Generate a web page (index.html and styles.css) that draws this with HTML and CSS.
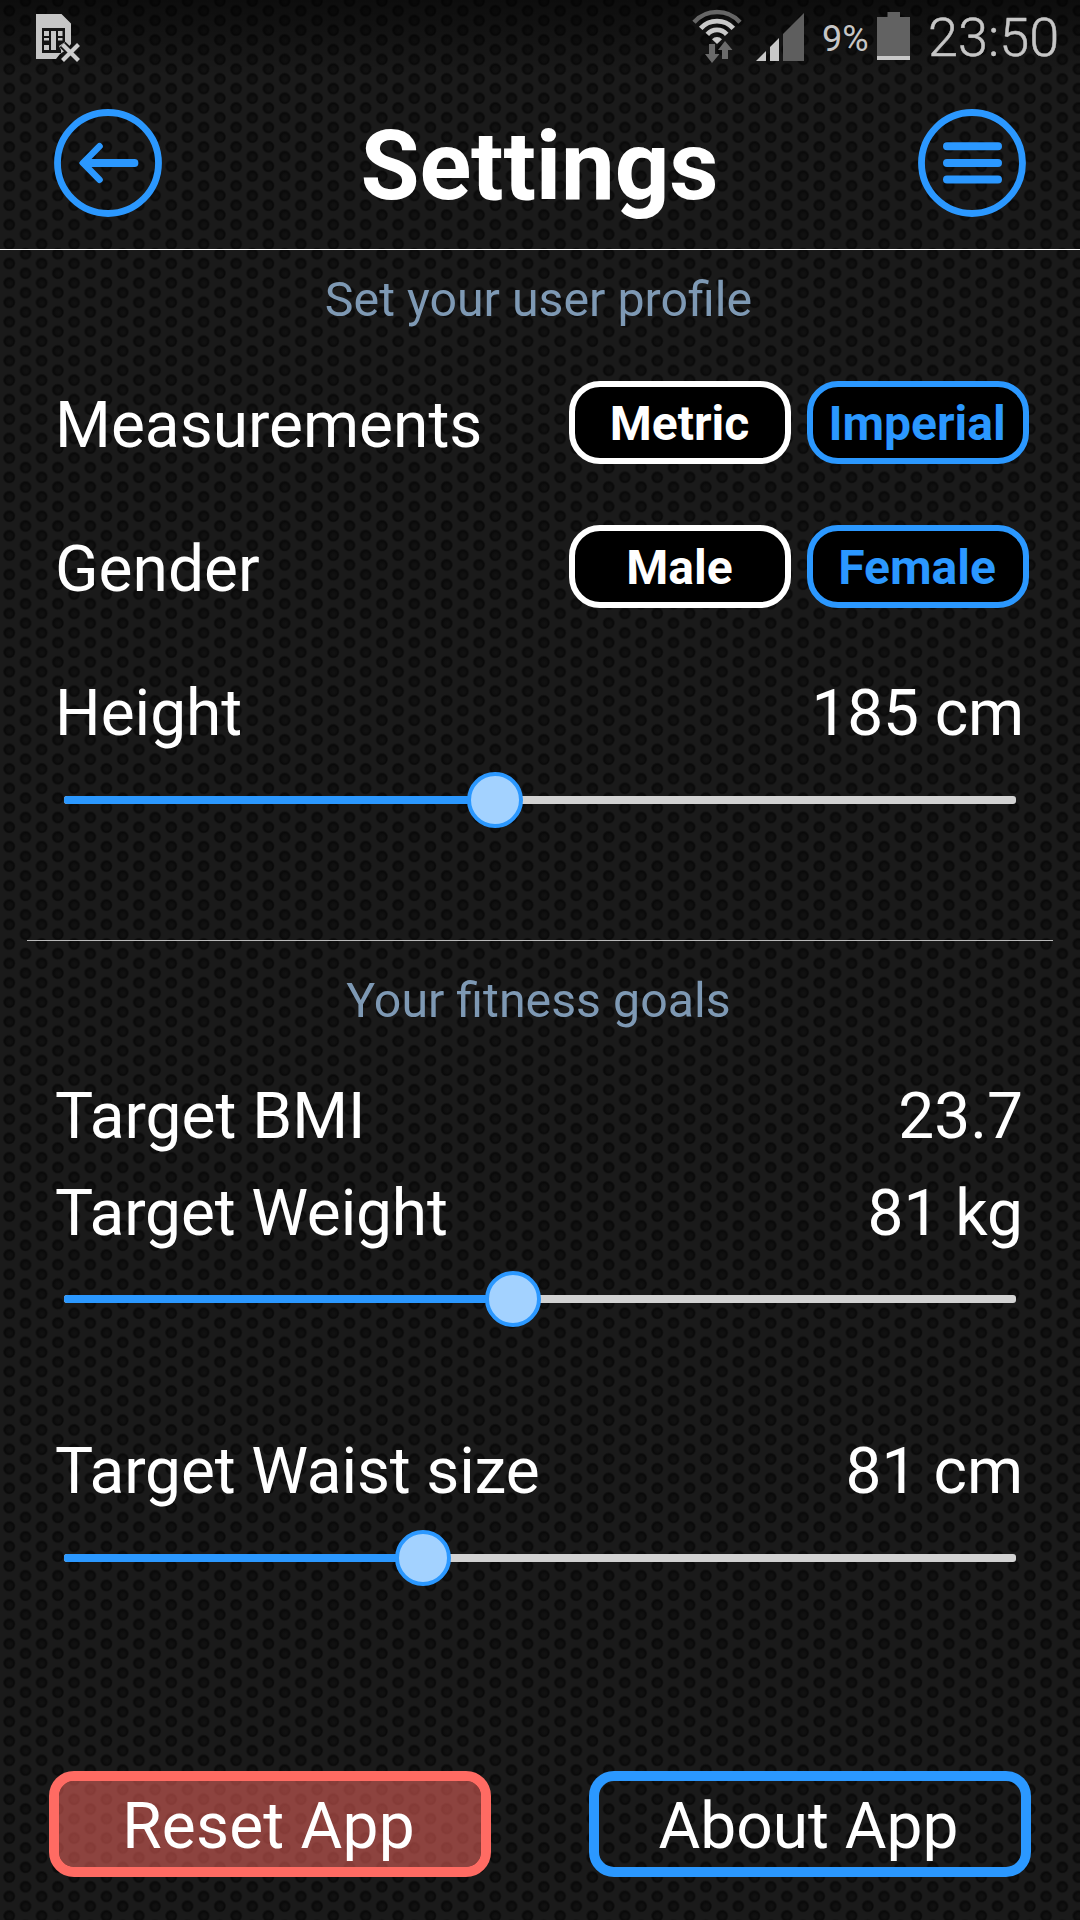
FILE: index.html
```html
<!DOCTYPE html>
<html lang="en">
<head>
<meta charset="utf-8">
<title>Settings</title>
<link rel="stylesheet" href="styles.css">
</head>
<body>
<svg class="mesh" width="1080" height="1920" aria-hidden="true">
  <defs>
    <radialGradient id="hole" cx="0.5" cy="0.5" r="0.5" fx="0.56" fy="0.58">
      <stop offset="0" stop-color="#131313"/>
      <stop offset="0.45" stop-color="#0f0f0f"/>
      <stop offset="0.75" stop-color="#090909"/>
      <stop offset="1" stop-color="#161616"/>
    </radialGradient>
    <pattern id="grid" x="1.1" y="0.98" width="32.4" height="19.44" patternUnits="userSpaceOnUse">
      <rect width="32.4" height="19.44" fill="#1a1a1a"/>
      <circle cx="8.1" cy="9.72" r="6.3" fill="url(#hole)"/>
      <circle cx="24.3" cy="0" r="6.3" fill="url(#hole)"/>
      <circle cx="24.3" cy="19.44" r="6.3" fill="url(#hole)"/>
    </pattern>
  </defs>
  <rect width="1080" height="1920" fill="url(#grid)"/>
</svg>

<div class="screen">
  <div class="status-bar">
    <svg class="sim" width="46" height="52" viewBox="35 12 46 52">
      <path d="M36 14H61.500L71 23.500V44L66 50 60 54 56 59H36Z" fill="#c6c6c6"/>
      <path d="M42 28H65V42L59 46 61 50V53H42Z" fill="#141414"/>
      <path d="M44 31h5v5h-5zM51 31h5v19h-5zM58 31h4.500v5H58zM44 38h5v2.500h-5zM44 45h5v5h-5zM58 38h4.500v2.500H58z" fill="#c6c6c6"/>
      <path d="M62.500 44.500 78.500 60.500M78.500 44.500 62.500 60.500" stroke="#161616" stroke-width="8"/>
      <path d="M62.500 44.500 78.500 60.500M78.500 44.500 62.500 60.500" stroke="#cdcdcd" stroke-width="4.200"/>
    </svg>
    <div class="status-right">
      <svg width="50" height="56" viewBox="692 9 50 56" fill="none">
        <path d="M694 22.300A31 31 0 0 1 740 22.300" stroke="#666" stroke-width="4.500"/>
        <path d="M700.700 28.300A22 22 0 0 1 733.300 28.300" stroke="#c8c8c8" stroke-width="4.800"/>
        <path d="M707.300 34.300A13 13 0 0 1 726.700 34.300" stroke="#c8c8c8" stroke-width="4.800"/>
        <path d="M712 39.200A7 7 0 0 1 722 39.200L717 44Z" fill="#c8c8c8"/>
        <path d="M709 44h6v10h4.500l-7.500 9-7-9h4zM722 59v-9h-4l7-9 7.500 9H728v9z" fill="#6a6a6a"/>
      </svg>
      <svg class="signal" width="48" height="50" viewBox="756 12 48 50">
        <path d="M756 61 766 51V61ZM770 47 779 38V61H770Z" fill="#c8c8c8"/>
        <path d="M783 34 804 13V61H783Z" fill="#5e5e5e"/>
      </svg>
      <span class="percent">9%</span>
      <svg class="battery" width="33" height="50" viewBox="877 11 33 50">
        <path d="M877 17H887.500V12H900V17H910V56H877Z" fill="#626262"/>
        <path d="M877 56h33v4h-33z" fill="#c8c8c8"/>
      </svg>
      <span class="clock">23:50</span>
    </div>
  </div>

  <header class="header">
    <svg width="108" height="108" viewBox="0 0 108 108" fill="none" stroke="#2b98ff">
      <circle cx="54" cy="54" r="50.500" stroke-width="6.800"/>
      <path d="M80.500 54H33" stroke-width="7.800" stroke-linecap="round"/>
      <path d="M45.500 37.300 29 54 45.500 70.700" stroke-width="6.600" stroke-linecap="round" stroke-linejoin="round"/>
      <path d="M25 54 34 46V62Z" fill="#2b98ff" stroke="none"/>
    </svg>
    <h1 class="title">Settings</h1>
    <svg width="108" height="108" viewBox="0 0 108 108" fill="none" stroke="#2b98ff">
      <circle cx="54" cy="54" r="50.500" stroke-width="6.800"/>
      <path d="M29 37.300H80M29 54H80M29 70.500H80" stroke-width="8" stroke-linecap="round"/>
    </svg>
  </header>

  <section class="profile">
    <h2 class="section-title">Set your user profile</h2>
    <div class="rows">
      <div class="row">
        <span class="label">Measurements</span>
        <div class="options">
          <button class="option">Metric</button>
          <button class="option active">Imperial</button>
        </div>
      </div>
      <div class="row">
        <span class="label">Gender</span>
        <div class="options">
          <button class="option">Male</button>
          <button class="option active">Female</button>
        </div>
      </div>
      <div class="row">
        <span class="label">Height</span>
        <span class="label value tight">185 cm</span>
      </div>
    </div>
    <div class="slider"><div class="track"><div class="fill" style="width:431px"></div></div><div class="thumb" style="left:431px"></div></div>
  </section>

  <section class="goals">
    <h2 class="section-title">Your fitness goals</h2>
    <div class="goal bmi">
      <span>Target BMI</span>
      <span class="value">23.7</span>
    </div>
    <div class="goal weight">
      <span class="tight">Target Weight</span>
      <span class="value">81 kg</span>
    </div>
    <div class="slider"><div class="track"><div class="fill" style="width:449px"></div></div><div class="thumb" style="left:449px"></div></div>
    <div class="goal waist">
      <span class="tight">Target Waist size</span>
      <span class="value">81 cm</span>
    </div>
    <div class="slider"><div class="track"><div class="fill" style="width:359px"></div></div><div class="thumb" style="left:359px"></div></div>
  </section>

  <footer class="actions">
    <button class="action reset">Reset App</button>
    <button class="action about">About App</button>
  </footer>
</div>
</body>
</html>
```

FILE: styles.css
```css
* {
  box-sizing: border-box;
}

body {
  margin: 0;
  width: 1080px;
  height: 1920px;
  overflow: hidden;
  background: #1a1a1a;
  color: #fff;
  font-family: Roboto, "Liberation Sans", sans-serif;
}

svg {
  display: block;
  flex: none;
}

button {
  margin: 0;
  font-family: inherit;
  color: #fff;
}

/* Perforated backdrop behind the whole screen */
.mesh {
  position: absolute;
  top: 0;
  left: 0;
  z-index: -1;
}

.screen {
  display: flex;
  flex-direction: column;
  height: 1920px;
}

/* Status bar */
.status-bar {
  display: flex;
  justify-content: space-between;
  height: 76px;
  padding: 0 21px 0 35px;
  background: linear-gradient(rgba(0, 0, 0, 0.5), rgba(0, 0, 0, 0));
  color: #c6c6c6;
}

.sim {
  margin-top: 12px;
}

.status-right {
  display: flex;
  align-items: flex-start;
  padding-top: 9px;
}

.signal {
  margin: 3px 0 0 14px;
}

.percent {
  margin: 9px 0 0 18px;
  width: 47px;
  font-size: 36px;
  line-height: 42px;
}

.battery {
  margin: 2px 0 0 8px;
}

.clock {
  margin: -3px 0 0 18px;
  width: 131px;
  font-size: 54px;
  font-weight: 300;
  line-height: 63px;
  -webkit-text-stroke: 0.5px #c6c6c6;
}

/* Header */
.header {
  display: flex;
  align-items: center;
  justify-content: space-between;
  height: 174px;
  padding: 1px 54px 0;
  border-bottom: 1px solid #fff;
}

.title {
  margin: 6px 1px 0 0;
  font-size: 96px;
  font-weight: 700;
  line-height: 112px;
  letter-spacing: -0.15px;
}

/* Sections */
.section-title {
  margin: 0;
  padding-right: 3px;
  color: #7e99b4;
  font-size: 48.3px;
  font-weight: 400;
  line-height: 57px;
  text-align: center;
}

.profile {
  padding-top: 21px;
}

.rows {
  display: flex;
  flex-direction: column;
  gap: 61px;
  margin: 53px 51px 20px 55px;
}

.row {
  display: flex;
  align-items: center;
  justify-content: space-between;
  height: 83px;
}

.label {
  margin-top: 6px;
  font-size: 64px;
  line-height: 75px;
}

.value {
  padding-right: 6px;
}

.row .value {
  padding-right: 5px;
}

.options {
  display: flex;
  gap: 16px;
}

.option {
  width: 222px;
  height: 83px;
  padding: 2px 1px 0 0;
  border: 6px solid #fff;
  border-radius: 31px;
  background: #000;
  font-size: 48px;
  font-weight: 700;
  line-height: 57px;
}

.option.active {
  padding-right: 2px;
  border-color: #2b98ff;
  color: #2b98ff;
}

/* Sliders */
.slider {
  position: relative;
  height: 56px;
  margin: 0 64px;
  padding: 24px 0;
}

.track {
  height: 8px;
  border-radius: 3px;
  background: #d2d2d2;
  overflow: hidden;
}

.fill {
  height: 8px;
  background: #2b98ff;
}

.thumb {
  position: absolute;
  top: 0;
  width: 56px;
  height: 56px;
  margin-left: -28px;
  border: 4px solid #2b98ff;
  border-radius: 50%;
  background: #a3d2ff;
}

/* Goals */
.goals {
  margin: 112px 27px 0;
  padding-top: 31px;
  border-top: 1px solid #b8b8b8;
}

.goals .slider {
  margin: 0 37px;
}

.goal {
  display: flex;
  justify-content: space-between;
  padding: 0 24px 0 28px;
  font-size: 64px;
  line-height: 75px;
}

.bmi {
  margin-top: 50px;
}

.weight {
  margin: 22px 0 20px;
}

.waist {
  margin: 107px 0 21px;
}

.tight {
  letter-spacing: -0.15px;
}

/* Bottom actions */
.actions {
  display: flex;
  justify-content: space-between;
  margin-top: auto;
  padding: 0 49px 43px;
}

.action {
  width: 442px;
  height: 106px;
  padding: 5px 3px 0 0;
  border: 10px solid #2b98ff;
  border-radius: 25px;
  background: transparent;
  font-size: 64px;
  line-height: 75px;
}

.reset {
  border-color: #ff6b63;
  background: rgba(255, 107, 99, 0.5) padding-box;
  letter-spacing: 0.2px;
}
```
